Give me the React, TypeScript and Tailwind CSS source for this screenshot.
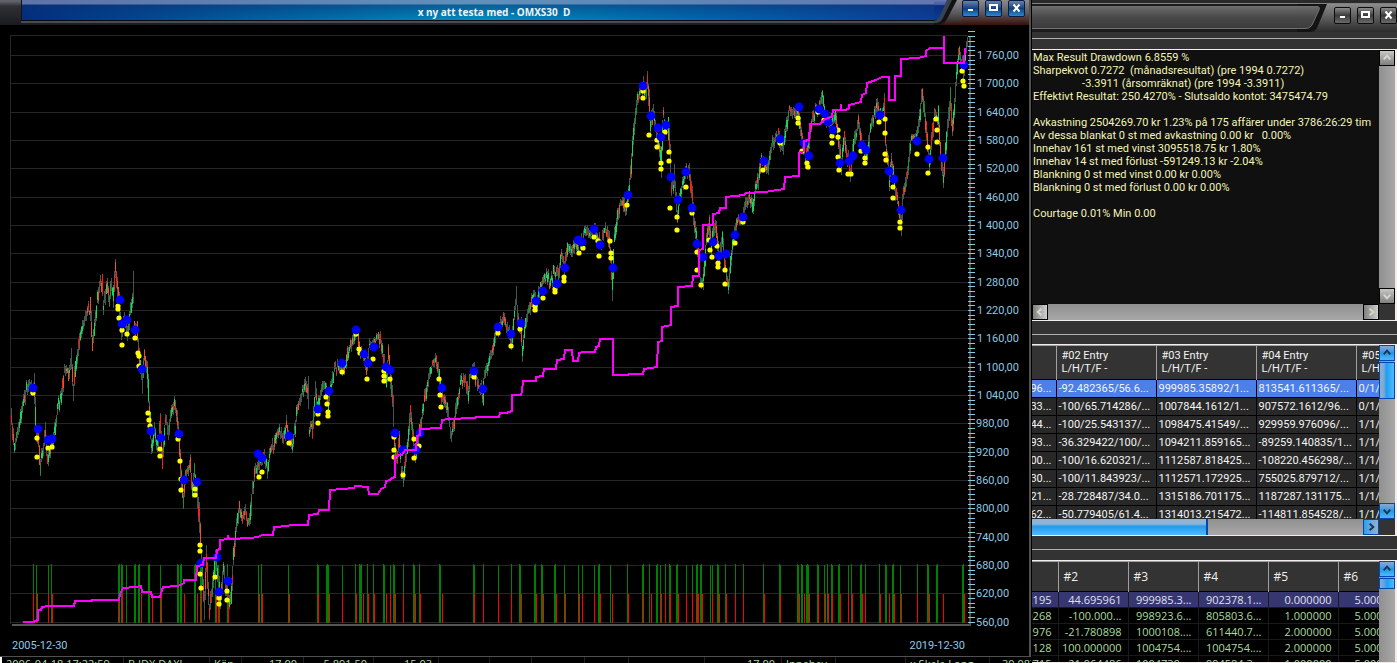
import { ReactNode } from "react";

type Point = [number, number];

const parsePoints = (text: string): Point[] =>
  text.trim().split(/\s+/).map((pair) => pair.split(",").map(Number) as Point);

const PRICE = parsePoints(`
11,422 14,445 18,432 22,408 25,395 28,382 31,388 34,390 36,435 38,440 40,468 42,450 45,435 47,460 50,448 53,440
57,410 61,395 64,372 68,375 71,360 73,388 76,360 80,335 84,320 87,310 90,308 92,342 95,320 97,300 100,283 102,290
103,305 107,284 109,302 111,287 113,295 115,270 117,285 119,305 121,335 124,320 127,335 130,310 133,291 134,325
137,335 140,370 142,382 144,358 147,375 149,410 151,447 154,432 157,445 160,425 162,458 165,422 168,430 171,412
174,402 177,420 179,440 181,480 183,498 186,472 190,468 192,488 194,472 197,495 199,520 201,560 204,606 206,560
209,610 212,590 215,560 218,580 220,598 223,570 226,590 228,605 231,590 233,560 236,525 239,507 242,517 245,510
247,520 250,515 252,490 255,470 258,465 261,460 264,455 267,470 270,450 274,445 277,430 280,432 283,440 286,425
289,438 292,445 295,425 297,405 300,398 303,392 305,384 308,395 309,430 312,428 315,390 317,408 320,395 323,385
325,385 328,405 331,385 334,370 337,365 340,365 343,370 346,365 348,350 351,342 355,335 358,335 360,353 363,355
366,368 369,345 372,345 375,340 378,335 381,345 384,365 386,382 388,357 391,385 393,410 394,440 396,460 399,445
401,470 403,478 405,460 408,435 410,408 413,440 415,458 418,440 421,420 424,400 427,385 430,370 433,365 436,362
438,370 441,395 444,400 447,410 449,425 451,432 454,420 457,400 460,385 463,377 466,385 468,393 470,370 473,370
476,380 479,385 483,396 484,375 487,365 490,352 493,350 496,332 499,325 503,316 506,325 509,330 511,342 514,312
516,300 518,320 521,330 522,350 525,325 528,312 531,300 533,292 537,308 539,290 544,280 547,276 550,284 554,270
558,275 561,254 564,268 568,243 572,250 575,242 578,245 582,240 586,230 590,232 594,229 597,240 601,243 604,232
607,230 609,245 611,265 612,285 614,240 617,220 620,200 623,200 625,213 628,195 631,165 634,125 637,98 640,90
643,86 646,90 647,80 649,105 650,130 653,107 656,130 659,145 661,158 663,115 665,125 668,128 670,160 671,190
674,180 677,218 680,195 683,182 686,171 689,172 692,200 694,225 697,245 700,280 703,282 706,240 709,222 711,248
714,226 716,230 719,258 722,240 725,270 728,284 731,255 734,235 737,217 740,220 743,215 746,201 749,196 752,208
755,190 758,180 761,157 765,165 768,165 771,145 775,137 778,135 780,148 783,145 786,125 789,110 793,115 798,111
801,135 805,158 809,140 812,120 816,110 820,105 822,97 825,115 829,123 832,120 835,116 838,140 841,163 844,137
846,150 850,173 854,140 858,122 862,145 867,155 870,130 874,115 877,103 879,115 884,107 886,150 889,178 891,160
894,185 897,200 901,225 903,195 907,170 911,140 915,140 918,127 922,93 925,120 929,163 934,114 938,120 940,152
943,178 947,130 950,102 952,130 957,65 959,52 963,74 966,46 968,40`);

const BLUE = parsePoints(`
33,388 38,429 48,440 52,439 120,300 122,324 127,320 135,330 142,369 151,431 161,438 179,434 184,480 197,482 201,563
217,557 219,592 228,581 258,454 262,458 289,436 318,409 329,391 342,363 356,330 364,354 368,363 374,347 386,367
390,370 395,433 403,450 416,450 420,433 442,388 474,371 483,389 498,327 511,334 521,323 536,301 543,291 557,284
565,268 578,240 582,242 594,229 600,245 613,268 628,195 643,86 651,116 658,128 661,137 666,125 671,177 678,200
686,172 692,208 697,244 703,257 713,242 719,256 726,254 735,235 743,217 764,161 780,139 799,107 804,143 809,156
819,109 825,114 828,122 833,130 840,163 849,161 853,156 862,145 866,150 880,115 889,171 894,179 901,210 917,141
929,159 943,158 964,65`);

const YELLOW = parsePoints(`
33,393 37,438 37,457 48,448 52,447 118,306 118,309 119,318 122,330 122,345 127,334 135,338 138,353 139,356 139,366
148,413 149,420 150,426 160,449 160,456 178,439 180,461 181,479 181,490 195,483 195,489 195,495 200,545 200,551
200,574 201,588 215,577 219,598 219,604 227,591 227,600 259,477 262,472 289,443 318,414 318,423 326,397 327,404
328,412 328,416 342,372 356,334 359,349 360,353 367,379 373,359 384,371 384,376 384,381 390,379 394,437 394,450
394,457 403,475 414,439 414,458 419,446 439,379 440,395 441,407 474,377 498,333 511,346 520,329 535,306 535,310
543,298 555,289 555,292 564,277 564,281 579,253 583,248 594,237 598,241 599,256 610,241 611,253 611,258 627,205
643,91 643,98 649,135 657,140 657,147 661,163 661,169 665,132 669,152 669,161 670,208 677,217 677,230 686,187
692,213 697,252 697,270 701,285 709,240 710,250 712,257 717,246 718,263 718,267 725,270 725,284 735,243 743,222
763,170 780,143 798,118 798,123 802,151 807,163 808,167 818,112 824,120 832,136 832,143 838,130 838,137 838,157
839,170 848,174 851,174 861,151 865,158 865,163 879,122 885,119 885,133 885,154 886,160 893,187 893,198 900,222
900,228 917,154 928,147 928,173 936,119 937,130 937,142 962,71 963,81 964,86`);

const EQUITY = `23,622 34,622 35,621 38,620 38,610 41,610 42,607 48,606 74,606 75,601 92,601 92,600 119,600 120,594
123,588 135,587 141,586 142,592 151,592 152,597 160,597 162,590 163,587 178,586 184,583 184,580 196,580 197,566
203,565 204,558 216,558 217,550 220,549 220,540 228,539 228,535 229,539 251,538 258,537 262,535 273,535 274,527
288,526 290,525 308,525 309,515 318,514 319,510 329,510 330,490 342,489 354,488 355,486 368,487 369,494 378,494
381,489 385,487 386,481 390,480 392,478 395,477 395,456 402,455 405,450 416,450 417,436 420,435 420,429 441,428
442,420 448,419 475,418 476,417 499,417 500,413 506,413 512,411 512,395 521,395 522,391 523,381 536,381 536,377
543,376 544,369 556,369 557,360 564,359 565,350 572,350 573,361 578,361 579,353 583,352 595,352 596,347 599,346
600,339 613,339 613,375 628,375 629,374 643,374 644,369 657,367 658,342 662,341 662,327 671,325 671,307 678,306
678,287 692,286 693,276 699,276 699,250 703,249 703,225 713,225 713,214 719,213 720,208 726,208 726,197 744,195
746,193 765,192 771,191 784,189 785,177 799,176 799,153 804,151 804,141 809,140 810,124 820,124 825,119 832,117
833,110 841,110 841,104 841,110 846,110 849,108 849,105 861,102 862,95 866,93 867,83 876,80 882,77 889,77 889,100
895,100 895,76 901,76 901,59 918,58 926,56 926,51 930,48 944,48 944,36 944,63 964,63 965,48`;

const GREEN_BARS = [
  33, 36, 48, 51, 118, 119, 121, 122, 126, 134, 135, 138, 139, 148, 149, 160, 177, 178, 180, 181, 194, 195, 200, 201, 215,
  218, 227, 258, 261, 288, 317, 318, 326, 327, 328, 342, 355, 359, 360, 361, 367, 373, 383, 384, 390, 393, 394, 403, 413,
  414, 419, 439, 440, 473, 474, 483, 498, 511, 519, 520, 534, 535, 541, 542, 554, 555, 564, 578, 582, 594, 598, 599, 610,
  627, 642, 643, 649, 656, 657, 660, 665, 669, 670, 676, 677, 686, 692, 696, 697, 700, 701, 710, 712, 717, 718, 725, 735,
  743, 763, 779, 780, 797, 798, 801, 802, 806, 807, 808, 817, 818, 824, 827, 831, 832, 838, 839, 848, 851, 860, 861, 865,
  879, 885, 886, 892, 893, 900, 917, 927, 928, 936, 937, 962, 963,
];

const RED_BARS = [
  33, 37, 48, 52, 119, 122, 141, 152, 161, 184, 197, 201, 216, 219, 228, 259, 262, 289, 318, 329, 342, 356, 363, 368, 374,
  386, 390, 395, 403, 415, 420, 442, 474, 483, 498, 511, 521, 536, 543, 556, 565, 579, 582, 594, 600, 612, 628, 643, 651,
  661, 665, 670, 678, 686, 692, 696, 698, 702, 712, 719, 726, 735, 743, 764, 780, 799, 804, 809, 818, 825, 828, 832, 840,
  848, 852, 862, 865, 880, 889, 894, 901, 917, 929, 943, 964,
];

const LEVELS = Array.from({ length: 21 }, (_, i) => ({
  y: Math.round(55 + i * 28.33),
  label: `${1760 - i * 60 >= 1000 ? "1 " : ""}${String(1760 - i * 60).slice(-3)},00`,
}));

const TICKS = Array.from({ length: 126 }, (_, i) => Math.round(31.4 + i * 4.722));

function buildCandles() {
  let seed = 7;
  const rand = () => {
    seed = (seed * 16807) % 2147483647;
    return seed / 2147483647;
  };
  let wicks = "";
  let bright = "";
  let dim = "";
  let red = "";
  let orange = "";
  for (let i = 0; i < PRICE.length - 1; i++) {
    const [x0, y0] = PRICE[i];
    const [x1, y1] = PRICE[i + 1];
    const step = (y1 - y0) / (x1 - x0);
    for (let x = x0; x < x1; x++) {
      const y = y0 + step * (x - x0) + (rand() - 0.5) * 8;
      const half = Math.min(12, Math.abs(step) / 2) + 2;
      const top = Math.round(y - half - rand() * 4);
      const bottom = Math.round(y + half + rand() * 4);
      wicks += `M${x} ${top}V${bottom}`;
      const from = Math.round(y - half * (0.3 + rand()));
      const to = Math.round(y + half * (0.3 + rand()));
      const body = `M${x} ${from}V${to}`;
      const up = rand() < (step < -1 ? 0.75 : step > 1 ? 0.25 : 0.5);
      const pick = rand();
      if (pick < 0.2) continue;
      if (up) {
        if (pick < 0.75) bright += body;
        else dim += body;
      } else if (pick < 0.55) red += body;
      else orange += body;
    }
  }
  return { wicks, bright, dim, red, orange };
}

const CANDLES = buildCandles();

function PriceChart() {
  return (
    <svg
      viewBox="0 25 1029 610"
      preserveAspectRatio="xMinYMin meet"
      className="block min-h-0 w-full flex-1"
      role="img"
      aria-label="OMXS30"
    >
      <g shapeRendering="crispEdges">
        <rect x="10" y="35" width="959" height="1" fill="#262626" />
        <rect x="10" y="35" width="1" height="589" fill="#262626" />
        {LEVELS.map(({ y }) => (
          <rect key={y} x="10" y={y} width="959" height="1" fill="#262626" />
        ))}
        <rect x="12" y="624" width="958" height="2" fill="#555" />
        <rect x="969" y="36" width="2" height="590" fill="#4c4f50" />
        {TICKS.map((y) => (
          <rect key={y} x="968" y={y} width="7" height="1" fill="#8cc8dc" />
        ))}
        <g transform="translate(0.5 0)" fill="none" strokeWidth="1">
          <path d={CANDLES.wicks} stroke="#455450" />
          <path d={CANDLES.bright} stroke="#18d85c" />
          <path d={CANDLES.dim} stroke="#2a8a38" />
          <path d={CANDLES.red} stroke="#f02418" />
          <path d={CANDLES.orange} stroke="#f05028" />
        </g>
        {GREEN_BARS.map((x) => (
          <rect key={x} x={x} y={x % 2 ? 564 : 565} width="1" height={x % 2 ? 59 : 58} fill="#008000" />
        ))}
        {RED_BARS.map((x) => (
          <rect key={x} x={x} y="594" width="1" height="29" fill="#f00" />
        ))}
      </g>
      {YELLOW.map(([x, y]) => (
        <circle key={`${x}-${y}`} cx={x} cy={y} r="2.6" fill="#ff0" />
      ))}
      {BLUE.map(([x, y]) => (
        <circle key={`${x}-${y}`} cx={x} cy={y} r="4.4" fill="#00f" />
      ))}
      <polyline points={EQUITY} fill="none" stroke="#f0f" strokeWidth="2" shapeRendering="crispEdges" />
      <g className="text-[11px] [font-family:Roboto,'Liberation_Sans',sans-serif]" fill="#8cc8e0">
        {LEVELS.map(({ y, label }) => (
          <text key={y} x={label.startsWith("1 ") ? 977 : 976} y={y + 4}>
            {label}
          </text>
        ))}
      </g>
    </svg>
  );
}

function WindowGlyph({ kind }: { kind: "min" | "max" | "close" }) {
  return (
    <svg viewBox="0 0 15 15" className="block size-[15px]" shapeRendering="crispEdges" aria-hidden="true">
      {kind === "min" && <rect x="5" y="8" width="5" height="2" fill="#fff" />}
      {kind === "max" && <path d="M3 3h9v7H3zM5 5v3h5V5z" fill="#fff" fillRule="evenodd" />}
      {kind === "close" && (
        <path d="M4.5 3.5l6 7M10.5 3.5l-6 7" stroke="#fff" strokeWidth="2" shapeRendering="auto" />
      )}
    </svg>
  );
}

function WindowButtons({ blue }: { blue?: boolean }) {
  const look = blue
    ? "border-[#0a1a40] bg-linear-to-b from-[#6a84a8] via-[#12407e] to-[#2a8ad0]"
    : "border-[#0c0c0c] bg-linear-to-b from-[#8a8a8a] via-[#3c3c3c] to-[#6a6a6a]";
  return (
    <div className="flex gap-1.5">
      {(["min", "max", "close"] as const).map((kind) => (
        <button key={kind} type="button" aria-label={kind} className={`size-[17px] rounded-xs border ${look}`}>
          <WindowGlyph kind={kind} />
        </button>
      ))}
    </div>
  );
}

function ChartWindow() {
  return (
    <section className="flex min-h-0 flex-1 flex-col border-r-2 border-b border-[#505050] bg-black">
      <header className="flex h-[25px] shrink-0 bg-linear-to-b from-[#62626a] from-5% via-[#303034] via-25% to-[#1a1c20]">
        <div className="w-[21px] shrink-0" />
        <div className="flex min-w-0 flex-1 flex-col">
          <div className="h-5 border-l border-[#10151c] bg-linear-to-r from-[#002d80] via-[#0090c0] to-[#0c3c98]">
            <div className="flex h-full items-end justify-center bg-linear-to-b from-[#8890b8]/70 from-20% via-[#103070]/50 via-25% to-transparent pl-8">
              <h1 className="text-[10px] leading-4 font-bold whitespace-pre text-[#eef2f4] [font-family:'Noto_Sans',sans-serif]">
                x ny att testa med - OMXS30  D
              </h1>
            </div>
          </div>
          <div className="h-px bg-[#0a0c10]" />
          <div className="h-0.5 bg-[#464c52]" />
        </div>
        <svg viewBox="0 0 28 25" className="block h-[25px] w-7 shrink-0" aria-hidden="true">
          <defs>
            <linearGradient id="metal" x1="0" y1="0" x2="0" y2="1">
              <stop offset="0" stopColor="#8c8c90" />
              <stop offset="0.5" stopColor="#5c5c60" />
              <stop offset="0.8" stopColor="#403838" />
              <stop offset="1" stopColor="#38100a" />
            </linearGradient>
            <linearGradient id="blueEnd" x1="0" y1="0" x2="0" y2="1">
              <stop offset="0" stopColor="#6678b0" />
              <stop offset="0.24" stopColor="#4058a0" />
              <stop offset="0.28" stopColor="#0a2c78" />
              <stop offset="1" stopColor="#0c3c98" />
            </linearGradient>
          </defs>
          <rect width="28" height="25" fill="url(#metal)" />
          <path d="M0 0H23L13 19Q10 25 0 25Z" fill="#101216" />
          <path d="M0 23H2Q7 22.500 9 18L18 0H13L5 16Q3.500 20 0 21Z" fill="#3c424c" />
          <path d="M0 0H13L6 16Q4 20 0 20Z" fill="url(#blueEnd)" />
        </svg>
        <div className="h-full shrink-0 bg-linear-to-b from-[#8c8c90] via-[#5c5c60] via-50% to-[#38100a] pr-1">
          <WindowButtons blue />
        </div>
      </header>
      <PriceChart />
      <footer className="flex h-5 shrink-0 items-center justify-between pr-16 pl-3 text-[11px] leading-5 text-[#8cc8e8] [font-family:Roboto,'Liberation_Sans',sans-serif]">
        <time>2005-12-30</time>
        <time>2019-12-30</time>
      </footer>
    </section>
  );
}

const STRIP: { text: string; className: string }[] = [
  { text: "2006-04-18 17:22:59", className: "w-[122px] pl-1" },
  { text: "B IDX DAX!", className: "w-[86px] pl-1" },
  { text: "Köp", className: "w-[32px] pl-1" },
  { text: "17.00", className: "w-[62px] pr-1.5 text-right" },
  { text: "5 891.50", className: "w-[70px] pr-1.5 text-right" },
  { text: "15.03", className: "w-[65px] pr-1.5 text-right" },
  { text: "", className: "w-[51px]" },
  { text: "", className: "w-[42px]" },
  { text: "", className: "w-[53px]" },
  { text: "", className: "w-[44px]" },
  { text: "", className: "w-[76px]" },
  { text: "17.00", className: "w-[77px] pr-1.5 text-right" },
  { text: "Innehav", className: "w-[54px] pl-1" },
  { text: "", className: "w-[70px]" },
  { text: "x Skala Long", className: "w-[84px] pl-1" },
];

function TradeStrip() {
  return (
    <div className="flex h-1.5 shrink-0 overflow-hidden border-l-2 border-white bg-black text-[11px] leading-[14px] whitespace-nowrap text-[#a8dca0] [font-family:'Open_Sans',sans-serif]">
      {STRIP.map((cell, i) => (
        <div key={i} className={`shrink-0 border-r border-[#222] ${cell.className}`}>
          {cell.text}
        </div>
      ))}
      <div className="min-w-0 flex-1 overflow-hidden pl-3">30.087715</div>
    </div>
  );
}

const ARROWS = {
  up: "M4 9l3.500-4L11 9",
  down: "M4 6l3.500 4L11 6",
  left: "M9 4L5 7.500 9 11",
  right: "M6 4l4 3.500L6 11",
};

function ScrollButton({ dir, blue }: { dir: keyof typeof ARROWS; blue?: boolean }) {
  const side = dir === "left" || dir === "right";
  const look = blue
    ? side
      ? "border-[#0048b0] bg-linear-to-r from-[#20a0f0] to-[#90b0d0]"
      : "border-[#0048b0] bg-linear-to-b from-[#88a8cc] via-[#2098e8] to-[#50b8f8]"
    : side
      ? "border-black bg-linear-to-r from-[#808080] to-[#d0d0d0]"
      : "border-black bg-linear-to-b from-[#c8c8c8] to-[#808080]";
  return (
    <button type="button" aria-label={dir} className={`size-4 shrink-0 border ${look}`}>
      <svg viewBox="0 0 15 15" className="block size-3.5" aria-hidden="true">
        <path d={ARROWS[dir]} fill="none" stroke={blue ? "#1c3450" : "#d8d8cc"} strokeWidth="2" />
      </svg>
    </button>
  );
}

function Frame({ children, className }: { children: ReactNode; className: string }) {
  return (
    <section className={`flex overflow-hidden border-y border-r-2 border-[#f4ecec] bg-[#333] ${className}`}>
      {children}
    </section>
  );
}

function Divider({ className }: { className: string }) {
  return <div className={`shrink-0 border-[#b0b0b0] ${className}`} />;
}

const RESULT = `Max Result Drawdown 6.8559 %
Sharpekvot 0.7272  (månadsresultat) (pre 1994 0.7272)
                  -3.3911 (årsomräknat) (pre 1994 -3.3911)
Effektivt Resultat: 250.4270% - Slutsaldo kontot: 3475474.79

Avkastning 2504269.70 kr 1.23% på 175 affärer under 3786:26:29 tim
Av dessa blankat 0 st med avkastning 0.00 kr   0.00%
Innehav 161 st med vinst 3095518.75 kr 1.80%
Innehav 14 st med förlust -591249.13 kr -2.04%
Blankning 0 st med vinst 0.00 kr 0.00%
Blankning 0 st med förlust 0.00 kr 0.00%

Courtage 0.01% Min 0.00`;

const ENTRIES = [
  ["96...", "-92.482365/56.6...", "999985.35892/1...", "813541.611365/...", "0/1/"],
  ["33...", "-100/65.714286/...", "1007844.1612/1...", "907572.1612/96...", "0/1/"],
  ["44...", "-100/25.543137/...", "1098475.41549/...", "929959.976096/...", "1/1/"],
  ["93...", "-36.329422/100/...", "1094211.859165...", "-89259.140835/1...", "1/1/"],
  ["00...", "-100/16.620321/...", "1112587.818425...", "-108220.456298/...", "1/1/"],
  ["30...", "-100/11.843923/...", "1112571.172925...", "755025.879712/...", "1/1/"],
  ["21...", "-28.728487/34.0...", "1315186.701175...", "1187287.131175...", "1/1/"],
  ["62...", "-50.779405/61.4...", "1314013.215472...", "-114811.854528/...", "1/1/"],
];

const RUNS = [
  ["32.552195", "44.695961", "999985.3...", "902378.1...", "0.000000", "5.000000"],
  ["35.180268", "-100.000...", "998923.6...", "805803.6...", "1.000000", "5.000000"],
  ["31.402976", "-21.780898", "1000108....", "611440.7...", "2.000000", "5.000000"],
  ["33.722128", "100.000000", "1004754....", "1004754....", "2.000000", "5.000000"],
  ["30.087715", "-21.964486", "1004739....", "994584.3...", "1.000000", "5.000000"],
];

function EntryTable() {
  return (
    <table className="w-[446px] table-fixed border-collapse text-[11px] whitespace-nowrap text-[#f4f4f4]">
      <colgroup>
        <col className="w-6" />
        <col className="w-[100px]" />
        <col className="w-[100px]" />
        <col className="w-[100px]" />
        <col className="w-[122px]" />
      </colgroup>
      <thead>
        <tr className="h-[34px] border-t border-[#a0a0a0] bg-[#333] text-left align-top leading-[13px]">
          <th />
          {["#02 Entry", "#03 Entry", "#04 Entry", "#05 Entry"].map((name) => (
            <th key={name} className="border-l border-[#a0a0a0] pt-[3px] pl-[5px] font-normal">
              {name}
              <br />
              L/H/T/F -
            </th>
          ))}
        </tr>
      </thead>
      <tbody>
        {ENTRIES.map((row, r) => (
          <tr key={row[1]} className={`h-[18px] border-y border-black leading-4 ${r === 0 ? "bg-[#4c80e8]" : "bg-[#282828]"}`}>
            {row.map((cell, c) => (
              <td key={c} className="overflow-hidden border-r border-black p-0">
                <div className={c === 0 ? "flex justify-end pr-1" : "pl-0.5"}>{cell}</div>
              </td>
            ))}
          </tr>
        ))}
      </tbody>
    </table>
  );
}

function RunTable() {
  return (
    <table className="w-[376px] table-fixed border-collapse text-[11px] whitespace-nowrap text-[#a8dca0] [font-family:'Open_Sans',sans-serif]">
      <colgroup>
        <col className="w-[26px]" />
        <col className="w-[70px]" />
        <col className="w-[70px]" />
        <col className="w-[70px]" />
        <col className="w-[70px]" />
        <col className="w-[70px]" />
      </colgroup>
      <thead>
        <tr className="h-[30px] border-t border-[#a0a0a0] bg-[#333] text-left text-xs text-[#f0f0f0]">
          <th />
          {["#2", "#3", "#4", "#5", "#6"].map((name) => (
            <th key={name} className="border-l border-[#a0a0a0] pl-[5px] font-normal">
              {name}
            </th>
          ))}
        </tr>
      </thead>
      <tbody>
        {RUNS.map((row, r) => (
          <tr
            key={row[1]}
            className={`h-4 border-t leading-[15px] ${r === 0 ? "border-black bg-[#363670] text-[#e0e0f0]" : "border-[#1a1a1a] bg-black"}`}
          >
            {row.map((cell, c) => (
              <td key={c} className="overflow-hidden border-r border-[#1a1a1a] p-0">
                <div className="flex justify-end pr-1.5">{cell}</div>
              </td>
            ))}
          </tr>
        ))}
      </tbody>
    </table>
  );
}

function SidePanel() {
  return (
    <aside className="flex w-[365px] shrink-0 flex-col overflow-hidden bg-[#333] [font-family:Roboto,'Liberation_Sans',sans-serif]">
      <div className="h-[3px] shrink-0 bg-[#2a2a2a]" />
      <header className="flex h-[29px] shrink-0 border-t border-[#808080] bg-[#1c1c1c]">
        <div className="mt-0.5 mb-[3px] min-w-0 flex-1 border-y border-[#707070] bg-linear-to-b from-[#6a6a6a] via-[#484848] to-[#3c3c3c]" />
        <svg viewBox="0 0 37 28" className="block h-7 w-[37px] shrink-0" aria-hidden="true">
          <defs>
            <linearGradient id="grayBar" x1="0" y1="0" x2="0" y2="1">
              <stop offset="0" stopColor="#6a6a6a" />
              <stop offset="0.5" stopColor="#484848" />
              <stop offset="1" stopColor="#3c3c3c" />
            </linearGradient>
            <linearGradient id="grayMetal" x1="0" y1="0" x2="0" y2="1">
              <stop offset="0" stopColor="#8c8c8c" />
              <stop offset="1" stopColor="#2c2c2c" />
            </linearGradient>
          </defs>
          <path d="M0 0H37V28H0Z" fill="url(#grayMetal)" />
          <path d="M0 0H30L20 24Q18 28 12 28H0Z" fill="#141414" />
          <path d="M0 2.500H20Q23.500 2.500 22 6L15 21Q13 24.500 9 24.500H0" fill="url(#grayBar)" stroke="#707070" />
        </svg>
        <div className="bg-linear-to-b from-[#8c8c8c] to-[#2c2c2c] pt-[3px]">
          <WindowButtons />
        </div>
      </header>
      <Divider className="h-[7px] border-b" />
      <div className="h-2.5 shrink-0" />
      <Frame className="h-[272px] shrink-0">
        <div className="flex min-w-0 flex-1 flex-col">
          <pre className="min-h-0 flex-1 overflow-hidden bg-[#101010] pt-px pl-px text-[11px] leading-[13px] text-[#f4f4b8] [font-family:Roboto,'Liberation_Sans',sans-serif]">
            {RESULT}
          </pre>
          <div className="flex h-4 shrink-0 justify-between bg-linear-to-b from-[#909090] to-[#a8a8a8]">
            <ScrollButton dir="left" />
            <ScrollButton dir="right" />
          </div>
        </div>
        <div className="flex w-4 shrink-0 flex-col">
          <div className="flex flex-1 flex-col justify-between bg-linear-to-r from-[#909090] to-[#a8a8a8]">
            <ScrollButton dir="up" />
            <ScrollButton dir="down" />
          </div>
          <div className="h-4" />
        </div>
      </Frame>
      <Divider className="h-[14px] border-b" />
      <div className="h-[9px] shrink-0" />
      <Frame className="h-[192px] shrink-0">
        <div className="flex min-w-0 flex-1 flex-col">
          <div className="min-h-0 flex-1 overflow-hidden">
            <EntryTable />
          </div>
          <div className="flex h-4 shrink-0 justify-between bg-linear-to-b from-[#909090] to-[#a8a8a8]">
            <div className="w-[176px] border-r-2 border-[#0048b0] bg-linear-to-b from-[#90b4d8] from-30% via-[#1c9ce8] via-45% to-[#50b8ff]" />
            <ScrollButton dir="right" blue />
          </div>
        </div>
        <div className="flex w-4 shrink-0 flex-col">
          <div className="flex flex-1 flex-col bg-linear-to-r from-[#909090] to-[#a8a8a8]">
            <ScrollButton dir="up" blue />
            <div className="mt-px h-[37px] border border-[#0048b0] bg-linear-to-r from-[#88acd0] from-20% via-[#18a0f0] via-45% to-[#50b8ff]" />
            <div className="flex-1" />
            <ScrollButton dir="down" blue />
          </div>
          <div className="h-4" />
        </div>
      </Frame>
      <Divider className="h-[14px] border-b" />
      <div className="h-2.5 shrink-0" />
      <Frame className="min-h-0 flex-1">
        <div className="min-w-0 flex-1 overflow-hidden bg-black">
          <RunTable />
        </div>
        <div className="flex w-4 shrink-0 flex-col bg-linear-to-r from-[#909090] to-[#a8a8a8]">
          <ScrollButton dir="up" blue />
          <div className="mt-px h-[11px] border border-[#0048b0] bg-linear-to-r from-[#88acd0] via-[#18a0f0] to-[#50b8ff]" />
        </div>
      </Frame>
    </aside>
  );
}

export default function App() {
  return (
    <main className="flex h-screen overflow-hidden bg-black">
      <div className="flex min-w-0 flex-1 flex-col border-r border-black">
        <ChartWindow />
        <TradeStrip />
      </div>
      <SidePanel />
    </main>
  );
}
